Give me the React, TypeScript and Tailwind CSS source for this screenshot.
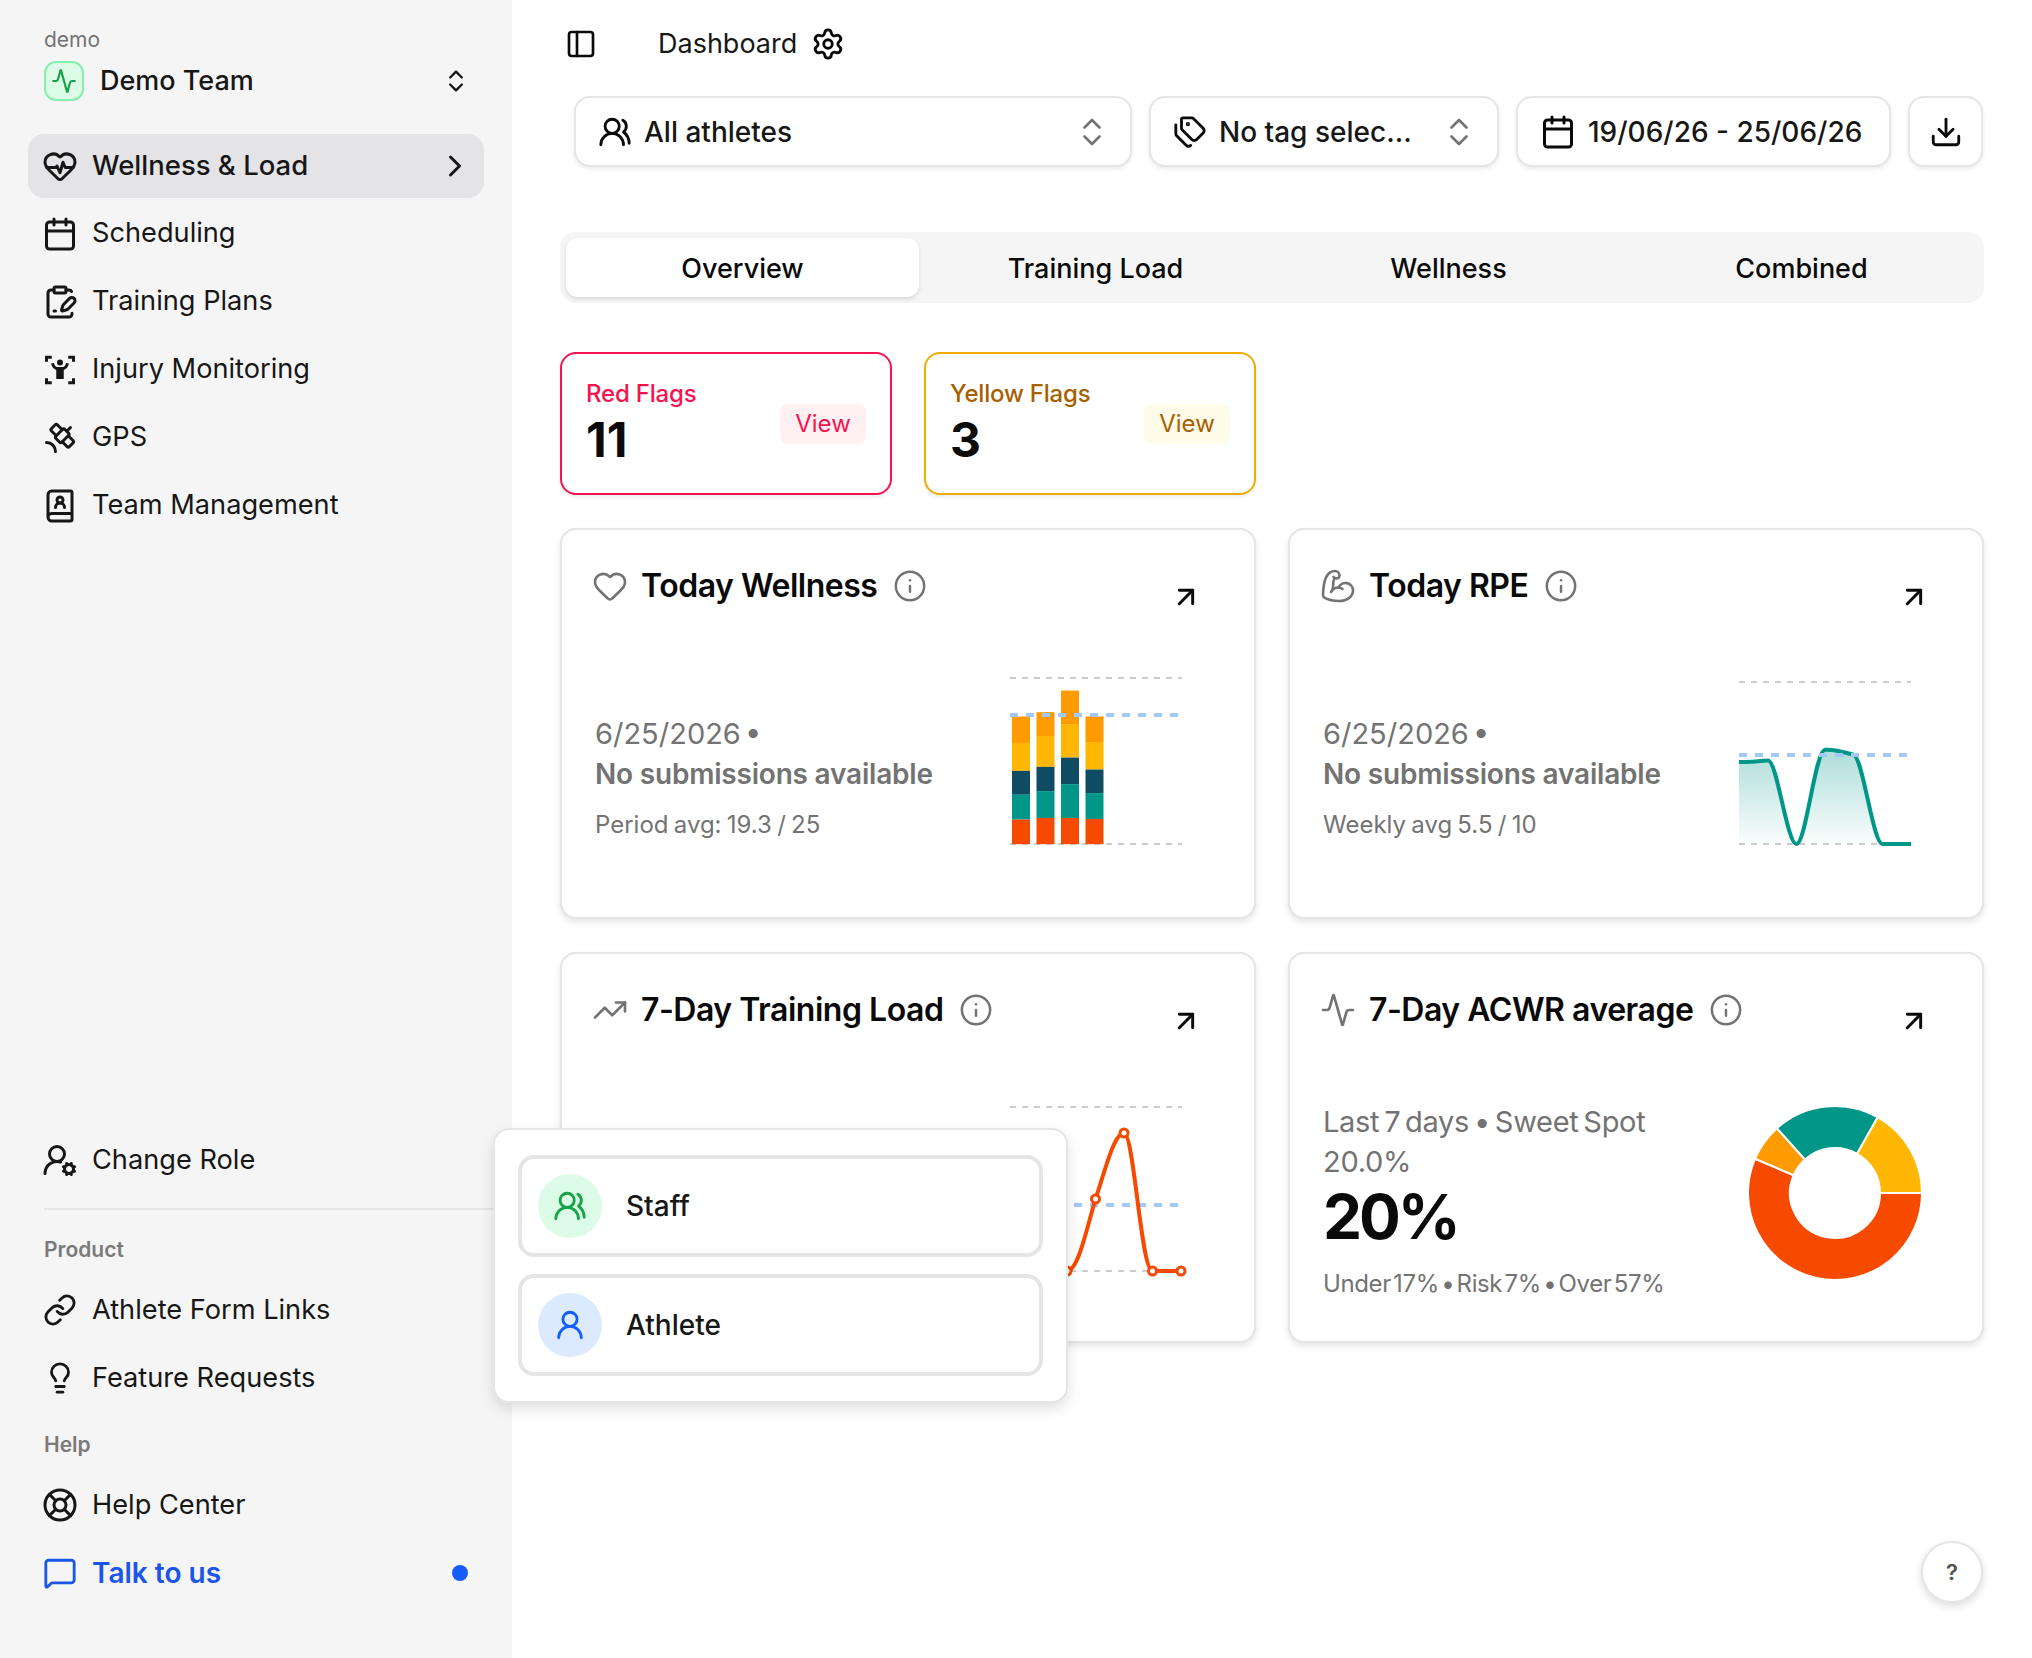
import React from 'react';
import {
  Activity, ArrowUpRight, BicepsFlexed, BookUser, Calendar, ChevronRight, ChevronsUpDown, ClipboardPenLine,
  Download, Heart, HeartPulse, Info, Lightbulb, LifeBuoy, Link as LinkIcon, MessageSquare, PanelLeft,
  Satellite, Settings, Tags, TrendingUp, UserRound, UserRoundCog, UsersRound,
} from 'lucide-react';

const InjuryIcon = ({ size = 36 }: { size?: number }) => (
  <svg width={size} height={size} viewBox="0 0 24 24" fill="none" stroke="currentColor" strokeWidth="2">
    <path d="M3 6.5V3.5h3.5M17.5 3.5H21v3M3 17.5v3h3.5M17.5 20.5H21v-3" />
    <circle cx="12" cy="7" r="2" fill="currentColor" stroke="none" />
    <path d="M7 7.5c.5 2.2 2 3.5 3.2 3.5h3.6c1.2 0 2.7-1.3 3.2-3.5" />
    <rect x="9.5" y="11" width="5" height="7" fill="currentColor" stroke="none" />
  </svg>
);

const NavRow = ({ icon, label, active, blue }: { icon: React.ReactNode; label: string; active?: boolean; blue?: boolean }) => (
  <div className={`flex h-16 items-center gap-[14px] rounded-2xl pl-[14px] pr-[16px] ${active ? 'bg-[#e4e4e7] text-[27.5px] font-medium text-[#171717]' : ''} ${blue ? 'text-[28px] font-semibold text-[#1a56e8]' : ''} ${!active && !blue ? 'text-[27.2px] text-[#171717]' : ''}`}>
    <span className="flex w-[36px] justify-center">{icon}</span>
    <span className="flex-1">{label}</span>
    {active && <ChevronRight size={36} strokeWidth={2} className="mr-[-5px]" />}
    {blue && <span className="h-4 w-4 rounded-full bg-[#155dfc]" />}
  </div>
);

const Sidebar = () => (
  <aside className="flex h-[1658px] w-[512px] shrink-0 flex-col bg-[#f5f5f5] pb-[53px] pl-[28px] pr-[28px] pt-[26px]">
    <div className="pl-[16px] text-[21px] leading-[28px] text-[#737373]">demo</div>
    <div className="mt-[7px] flex items-center pl-[16px] pr-[14px]">
      <span className="flex h-10 w-10 items-center justify-center rounded-xl border-2 border-[#86efac] bg-[#dcfce7] text-[#16a34a]">
        <Activity size={26} strokeWidth={2} />
      </span>
      <span className="ml-[16px] flex-1 text-[27px] font-medium text-[#171717]">Demo Team</span>
      <ChevronsUpDown size={28} strokeWidth={2} className="text-[#171717]" />
    </div>
    <nav className="mt-[32px] flex flex-col gap-1">
      <NavRow active icon={<HeartPulse size={36} />} label="Wellness & Load" />
      <NavRow icon={<Calendar size={36} />} label="Scheduling" />
      <NavRow icon={<ClipboardPenLine size={36} />} label="Training Plans" />
      <NavRow icon={<InjuryIcon />} label="Injury Monitoring" />
      <NavRow icon={<Satellite size={36} />} label="GPS" />
      <NavRow icon={<BookUser size={36} />} label="Team Management" />
    </nav>
    <div className="mt-auto flex flex-col">
      <NavRow icon={<UserRoundCog size={36} />} label="Change Role" />
      <div className="ml-[16px] mr-[-28px] mt-[16px] h-[2px] bg-[#e5e5e5]" />
      <div className="mt-[26px] pl-[16px] text-[21px] font-semibold leading-[28px] text-[#7a7a7a]">Product</div>
      <div className="mt-[14px] flex flex-col gap-1">
        <NavRow icon={<LinkIcon size={34} />} label="Athlete Form Links" />
        <NavRow icon={<Lightbulb size={34} />} label="Feature Requests" />
      </div>
      <div className="mt-[21px] pl-[16px] text-[21px] font-semibold leading-[28px] text-[#7a7a7a]">Help</div>
      <div className="mt-[14px] flex flex-col gap-1">
        <NavRow icon={<LifeBuoy size={36} />} label="Help Center" />
        <NavRow blue icon={<MessageSquare size={34} />} label="Talk to us" />
      </div>
    </div>
  </aside>
);

const FilterButton = ({ className, icon, label, chevrons }: { className: string; icon: React.ReactNode; label: string; chevrons?: boolean }) => (
  <div className={`flex h-[71px] items-center rounded-2xl border-2 border-[#e5e5e5] bg-white shadow-[0_2px_4px_rgba(0,0,0,0.08)] ${className}`}>
    {icon}
    {label && <span className="ml-[12px] flex-1 whitespace-nowrap text-[28px] font-medium text-[#171717]">{label}</span>}
    {chevrons && <ChevronsUpDown size={36} strokeWidth={1.75} className="text-[#737373]" />}
  </div>
);

const FlagCard = ({ label, value, tone }: { label: string; value: string; tone: 'red' | 'yellow' }) => {
  const red = tone === 'red';
  return (
    <div className={`flex h-[143px] w-[332px] items-center justify-between rounded-2xl border-2 bg-white pl-[24px] pr-[24px] shadow-[0_2px_4px_rgba(0,0,0,0.08)] ${red ? 'border-[#f6134f]' : 'border-[#f0ac00]'}`}>
      <div className="mt-[-2px]">
        <div className={`text-[24px] font-medium leading-[32px] tracking-[-0.2px] ${red ? 'text-[#f6134f]' : 'text-[#a85f00]'}`}>{label}</div>
        <div className="mt-[2px] text-[48px] font-bold leading-[56px] text-[#0a0a0a]">{value}</div>
      </div>
      <span className={`flex h-[40px] w-[86px] items-center justify-center rounded-lg text-[24px] ${red ? 'bg-[#fff1f2] text-[#f6134f]' : 'bg-[#fefce8] text-[#a85f00]'}`}>View</span>
    </div>
  );
};

const Card = ({ icon, title, children }: { icon: React.ReactNode; title: string; children: React.ReactNode }) => (
  <div className="h-[391px] rounded-2xl border-2 border-[#e5e5e5] bg-white shadow-[0_3px_6px_rgba(0,0,0,0.1)]">
    <div className="flex items-start justify-between pl-[30px] pr-[52px] pt-[36px]">
      <div className="flex h-10 items-center">
        <span className="flex w-[36px] justify-center text-[#737373]">{icon}</span>
        <span className="ml-[13px] text-[32px] font-semibold tracking-[-0.015em] text-[#0a0a0a]">{title}</span>
        <Info size={34} strokeWidth={1.75} className="ml-[16px] text-[#737373]" />
      </div>
      <ArrowUpRight size={32} strokeWidth={2.2} className="mt-[15px] text-[#0a0a0a]" />
    </div>
    {children}
  </div>
);

const NoSubmissions = ({ foot }: { foot: string }) => (
  <div className="mt-[101px]">
    <div className="text-[29px] leading-[40px] text-[#737373] [word-spacing:-4px]">6/25/2026 •</div>
    <div className="text-[28px] font-semibold leading-[40px] tracking-[-0.2px] text-[#737373]">No submissions available</div>
    <div className="mt-[13px] text-[24px] leading-[36px] text-[#737373] [word-spacing:-1.5px]">{foot}</div>
  </div>
);

const bars = [
  [592, 672, 756, 828, 903],
  [579, 651, 744, 817, 898],
  [514, 615, 716, 796, 898],
  [592, 669, 752, 823, 901],
];
const barColors = ['#ff9a00', '#ffb703', '#0f4c63', '#009688', '#f54a00'];
const toY = (u: number) => (u - 473) * 0.3317;

const WellnessChart = () => (
  <svg width="172" height="172" className="mt-[64px] overflow-visible">
    <line x1="0" x2="172" y1="1" y2="1" stroke="#cccccc" strokeWidth="2" strokeDasharray="6 6" />
    <line x1="0" x2="172" y1="167" y2="167" stroke="#cccccc" strokeWidth="2" strokeDasharray="6 6" />
    {bars.map((bar, i) => (
      <g key={i}>
        {bar.map((top, j) => (
          <rect key={j} x={2 + i * 24.5} y={toY(top)} width="18" height={toY(bar[j + 1] ?? 977) - toY(top)} fill={barColors[j]} />
        ))}
      </g>
    ))}
    <line x1="0" x2="168" y1="38" y2="38" stroke="#a3c8fa" strokeWidth="4" strokeDasharray="8 8" />
  </svg>
);

const rpeLine = 'M0 81 C10 81 19 80 29 79.5 C38 79 48 163 57.4 163 C67 163 76 70 86 68.8 C95 68 105 71 114.7 73.8 C124 77 134 163 143.4 163 L172 163';

const RpeChart = () => (
  <svg width="172" height="172" className="mt-[68px] overflow-visible">
    <defs>
      <linearGradient id="rpeFill" x1="0" y1="0" x2="0" y2="1">
        <stop offset="0%" stopColor="#009688" stopOpacity="0.32" />
        <stop offset="100%" stopColor="#009688" stopOpacity="0.02" />
      </linearGradient>
    </defs>
    <line x1="0" x2="172" y1="1" y2="1" stroke="#cccccc" strokeWidth="2" strokeDasharray="6 6" />
    <line x1="0" x2="172" y1="163" y2="163" stroke="#cccccc" strokeWidth="2" strokeDasharray="6 6" />
    <path d={`${rpeLine} L172 163 L0 163 Z`} fill="url(#rpeFill)" />
    <path d={rpeLine} fill="none" stroke="#009688" strokeWidth="4" />
    <line x1="0" x2="168" y1="74" y2="74" stroke="#a3c8fa" strokeWidth="4" strokeDasharray="8 8" />
  </svg>
);

const loadDots = [[0, 165], [28.5, 165], [57, 165], [85.5, 93], [114, 27], [142.5, 165], [171, 165]];

const LoadChart = () => (
  <svg width="172" height="172" className="overflow-visible">
    <line x1="0" x2="172" y1="1" y2="1" stroke="#cccccc" strokeWidth="2" strokeDasharray="6 6" />
    <line x1="0" x2="172" y1="165" y2="165" stroke="#cccccc" strokeWidth="2" strokeDasharray="6 6" />
    <line x1="0" x2="168" y1="99" y2="99" stroke="#a3c8fa" strokeWidth="4" strokeDasharray="8 8" />
    <path d="M0 165 L57 165 C68 165 76 125 85.5 93 C95 65 104 27 114 27 C124 27 131 165 142.5 165 L171 165" fill="none" stroke="#f54a00" strokeWidth="4" />
    {loadDots.map(([x, y]) => (
      <circle key={x} cx={x} cy={y} r="4" fill="#ffffff" stroke="#f54a00" strokeWidth="3" />
    ))}
  </svg>
);

const arc = (start: number, end: number, r0: number, r1: number) => {
  const pt = (deg: number, r: number) => {
    const a = (deg * Math.PI) / 180;
    return `${(88 + r * Math.cos(a)).toFixed(2)} ${(88 + r * Math.sin(a)).toFixed(2)}`;
  };
  const large = end - start > 180 ? 1 : 0;
  return `M${pt(start, r1)} A${r1} ${r1} 0 ${large} 1 ${pt(end, r1)} L${pt(end, r0)} A${r0} ${r0} 0 ${large} 0 ${pt(start, r0)} Z`;
};

const slices: [number, number, string][] = [
  [0, 203.2, '#f54a00'],
  [203.2, 228.1, '#ff9a00'],
  [228.1, 299.4, '#009688'],
  [299.4, 360, '#ffb703'],
];

const Donut = () => (
  <svg width="176" height="176" className="mt-[68px]">
    {slices.map(([a, b, color]) => (
      <path key={color} d={arc(a, b, 45, 87)} fill={color} stroke="#ffffff" strokeWidth="2" />
    ))}
  </svg>
);

const RoleOption = ({ icon, tint, label }: { icon: React.ReactNode; tint: string; label: string }) => (
  <div className="flex h-[102px] items-center rounded-2xl border-4 border-[#e5e5e5] bg-white pl-[16px]">
    <span className={`flex h-16 w-16 items-center justify-center rounded-full ${tint}`}>{icon}</span>
    <span className="ml-[24px] text-[28px] font-medium text-[#171717]">{label}</span>
  </div>
);

export default function App() {
  return (
    <div className="relative flex h-[1658px] w-full overflow-hidden bg-white font-[Inter,sans-serif] text-[#0a0a0a]">
      <Sidebar />

      <main className="flex-1 pl-[48px] pr-[48px] pt-[24px]">
        <div className="flex h-10 items-center pl-[5px]">
          <PanelLeft size={32} strokeWidth={2} />
          <span className="ml-[61px] text-[27px] text-[#171717]">Dashboard</span>
          <Settings size={34} strokeWidth={2} className="ml-[14px]" />
        </div>

        <div className="mt-[32px] flex gap-[17px] pl-[14px]">
          <FilterButton className="w-[558px] pl-[22px] pr-[20px]" icon={<UsersRound size={34} />} label="All athletes" chevrons />
          <FilterButton className="w-[350px] pl-[22px] pr-[20px]" icon={<Tags size={34} />} label="No tag selec…" chevrons />
          <FilterButton className="w-[375px] pl-[22px] pr-[20px]" icon={<Calendar size={36} />} label="19/06/26 - 25/06/26" />
          <FilterButton className="w-[75px] justify-center" icon={<Download size={34} />} label="" />
        </div>

        <div className="mt-[65px] grid h-[71px] grid-cols-4 items-center rounded-2xl bg-[#f5f5f5] px-[6px] text-[27px] font-medium">
          <div className="flex h-[59px] items-center justify-center rounded-xl bg-white pt-[3px] shadow-[0_2px_4px_rgba(0,0,0,0.12)]">Overview</div>
          <div className="pt-[3px] text-center">Training Load</div>
          <div className="pt-[3px] text-center">Wellness</div>
          <div className="pt-[3px] text-center">Combined</div>
        </div>

        <div className="mt-[49px] flex gap-[32px]">
          <FlagCard label="Red Flags" value="11" tone="red" />
          <FlagCard label="Yellow Flags" value="3" tone="yellow" />
        </div>

        <div className="mt-[33px] grid grid-cols-2 gap-x-[32px] gap-y-[33px]">
          <Card icon={<Heart size={36} strokeWidth={1.75} />} title="Today Wellness">
            <div className="flex justify-between pl-[33px] pr-[72px]">
              <NoSubmissions foot="Period avg: 19.3 / 25" />
              <WellnessChart />
            </div>
          </Card>
          <Card icon={<BicepsFlexed size={36} strokeWidth={1.75} />} title="Today RPE">
            <div className="flex justify-between pl-[33px] pr-[71px]">
              <NoSubmissions foot="Weekly avg 5.5 / 10" />
              <RpeChart />
            </div>
          </Card>
          <Card icon={<TrendingUp size={36} strokeWidth={1.75} />} title="7-Day Training Load">
            <div className="mt-[69px] flex justify-end pr-[72px]">
              <LoadChart />
            </div>
          </Card>
          <Card icon={<Activity size={36} strokeWidth={1.75} />} title="7-Day ACWR average">
            <div className="flex justify-between pl-[33px] pr-[59px]">
              <div className="mt-[65px]">
                <div className="text-[29px] leading-[40px] tracking-[-0.3px] text-[#737373] [word-spacing:-3px]">Last 7 days • Sweet Spot</div>
                <div className="text-[29px] leading-[40px] tracking-[-0.3px] text-[#737373]">20.0%</div>
                <div className="text-[62px] font-bold leading-[70px] tracking-[-3px] text-[#0a0a0a]">20%</div>
                <div className="mt-[14px] text-[24px] leading-[36px] tracking-[-0.4px] text-[#737373] [word-spacing:-4px]">Under 17% • Risk 7% • Over 57%</div>
              </div>
              <Donut />
            </div>
          </Card>
        </div>
      </main>

      <div className="absolute left-[493px] top-[1128px] flex w-[575px] flex-col gap-[17px] rounded-2xl border-2 border-[#e5e5e5] bg-white px-[23px] pb-[25px] pt-[25px] shadow-[0_6px_14px_rgba(0,0,0,0.12)]">
        <RoleOption tint="bg-[#dcfce7]" icon={<UsersRound size={34} className="text-[#16a34a]" />} label="Staff" />
        <RoleOption tint="bg-[#dbeafe]" icon={<UserRound size={34} className="text-[#155dfc]" />} label="Athlete" />
      </div>

      <div className="absolute left-[1921px] top-[1541px] flex h-[62px] w-[62px] items-center justify-center rounded-full border-2 border-[#e5e5e5] bg-white text-[22px] font-semibold text-[#525252] shadow-[0_3px_8px_rgba(0,0,0,0.14)]">?</div>
    </div>
  );
}
